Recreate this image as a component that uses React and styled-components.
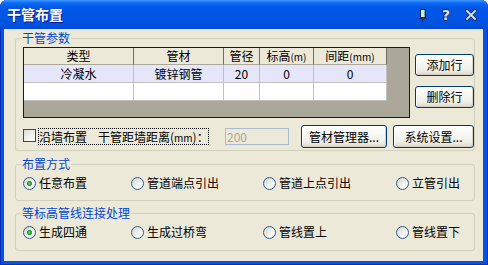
import React from 'react';
import styled, { createGlobalStyle } from 'styled-components';

const Global = createGlobalStyle`
  html, body { margin: 0; padding: 0; background: #ffffff; }
  body { font-family: "Noto Sans CJK SC", "Noto Sans", sans-serif; font-size: 12px; color: #000; }
  * { box-sizing: border-box; }
`;

const Window = styled.div`
  width: 488px;
  height: 265px;
  display: flex;
  flex-direction: column;
  background: #0553E3;
  border-radius: 7px 7px 0 0;
  overflow: hidden;
  box-shadow: inset 1px 0 #0831B8, inset -1px 0 #0831B8, inset 0 -1px #0831B8;
`;

const TitleBar = styled.div`
  height: 29px;
  flex: none;
  display: flex;
  align-items: center;
  padding: 0 11px 0 7px;
  background: linear-gradient(to bottom, #3F97FF 0%, #0F6BF5 10%, #0058E8 25%, #0055E5 60%, #0052E0 85%, #0049D3 100%);
`;

const Title = styled.div`
  color: #ffffff;
  font-weight: 700;
  font-size: 14px;
  line-height: 16px;
  text-shadow: 1px 1px #0A1A8A;
  margin-top: -1px;
`;

const Controls = styled.div`
  margin-left: auto;
  display: flex;
  align-items: center;
  height: 16px;
`;

const PinIcon = styled.svg`
  width: 8px;
  height: 13px;
  margin-right: 14px;
  margin-top: 1px;
`;

const HelpGlyph = styled.span`
  width: 10px;
  text-align: center;
  font-family: "DejaVu Sans", sans-serif;
  font-weight: 700;
  font-size: 14px;
  line-height: 14px;
  color: #CDEBFF;
  margin-right: 14px;
  text-shadow: 1px 0 #2B2266, -1px 0 #2B2266, 0 1px #2B2266, 0 -1px #2B2266;
`;

const CloseIcon = styled.svg`
  width: 12px;
  height: 12px;
`;

const Body = styled.div`
  flex: 1;
  margin: 0 5px 4px 4px;
  background: #ECE9D8;
  padding: 9px 8px 0 11px;
  display: flex;
  flex-direction: column;
`;

const Group = styled.div`
  position: relative;
  flex: none;
  border: 1px solid #D0D0BF;
  border-radius: 3px;
  margin-top: ${p => p.$mt || 0}px;
  height: ${p => p.$h}px;
  padding: ${p => p.$pad};
`;

const Legend = styled.span`
  position: absolute;
  top: -8px;
  left: 5px;
  padding: 0 1px;
  background: #ECE9D8;
  color: #0046D5;
  font-size: 12px;
  line-height: 14px;
`;

const TopRow = styled.div`
  display: flex;
  gap: 5px;
`;

const Table = styled.div`
  width: 387px;
  height: 71px;
  border: 1px solid #1A1A1A;
  background: #ABA899;
`;

const Grid = styled.div`
  display: grid;
  width: 363px;
  grid-template-columns: 110px 90px 36px 54px 73px;
  grid-template-rows: 17px 18px 18px;
`;

const HeadCell = styled.div`
  background: #ECE9D8;
  border-right: 1px solid #6F6E66;
  border-bottom: 1px solid #ACA899;
  text-align: center;
  line-height: 16px;
  white-space: nowrap;
`;

const Small = styled.span`
  font-size: 10px;
`;

const Cell = styled.div`
  background: ${p => (p.$sel ? '#E6E6FA' : '#ffffff')};
  border-right: 1px solid #C0C0C0;
  border-bottom: 1px solid #C0C0C0;
  text-align: center;
  line-height: 17px;
  white-space: nowrap;
`;

const SideButtons = styled.div`
  display: flex;
  flex-direction: column;
  gap: 10px;
  margin-top: 7px;
`;

const Button = styled.button`
  width: ${p => p.$w}px;
  height: ${p => p.$h || 23}px;
  margin-left: ${p => p.$ml || 0}px;
  padding: 0;
  border: 1px solid #003C74;
  border-radius: 3px;
  background: linear-gradient(to bottom, #FFFFFF 0%, #F7F7F3 40%, #EEEDE5 80%, #D8D3C6 100%);
  box-shadow: inset -1px -1px 0 #D6D0C2, inset 1px 1px 0 #FFFFFF;
  font-family: "Noto Sans CJK SC", sans-serif;
  font-size: 12px;
  line-height: 14px;
  color: #000;
  white-space: nowrap;
`;

const BottomRow = styled.div`
  display: flex;
  align-items: center;
  margin-top: 7px;
  height: 23px;
`;

const Checkbox = styled.span`
  width: 13px;
  height: 13px;
  flex: none;
  border: 1px solid #1C5180;
  background: linear-gradient(135deg, #DCDCD7 0%, #F4F4F0 60%, #FFFFFF 100%);
  margin-right: 2px;
  margin-top: -2px;
`;

const FocusLabel = styled.span`
  width: 171px;
  height: 17px;
  border: 1px dotted #000;
  line-height: 15px;
  white-space: nowrap;
  margin-right: 16px;
`;

const Gap = styled.span`
  margin-left: 11px;
`;

const TextInput = styled.input`
  width: 64px;
  height: 17px;
  border: 1px solid #A9BCD3;
  background: #ECE9D8;
  color: #ACA899;
  font-family: "Noto Sans CJK SC", sans-serif;
  font-size: 12px;
  padding: 0 0 0 1px;
  margin: 0 12px 0 0;
  line-height: 15px;
  outline: none;
`;

const RadioRow = styled.div`
  display: grid;
  grid-template-columns: 108px 132px 133px 1fr;
  align-items: center;
  height: 100%;
`;

const RadioItem = styled.div`
  display: flex;
  align-items: center;
  gap: 3px;
  white-space: nowrap;
  line-height: 14px;
`;

const RadioCircle = styled.span`
  width: 13px;
  height: 13px;
  flex: none;
  border-radius: 50%;
  border: 1px solid #2A5C8F;
  background: ${p =>
    p.$on
      ? 'radial-gradient(circle at 50% 50%, #5FD35F 0, #21A121 2.2px, transparent 2.8px), linear-gradient(135deg, #D2D2CC 0%, #F2F2EE 55%, #FFFFFF 100%)'
      : 'linear-gradient(135deg, #D2D2CC 0%, #F2F2EE 55%, #FFFFFF 100%)'};
`;

const headers = [
  ['类型'],
  ['管材'],
  ['管径'],
  ['标高', '(m)'],
  ['间距', '(mm)'],
];

const row1 = ['冷凝水', '镀锌钢管', '20', '0', '0'];

function Radio({ on, children }) {
  return (
    <RadioItem>
      <RadioCircle $on={on} />
      <span>{children}</span>
    </RadioItem>
  );
}

export default function App() {
  return (
    <>
      <Global />
      <Window>
        <TitleBar>
          <Title>干管布置</Title>
          <Controls>
            <PinIcon viewBox="0 0 8 13">
              <rect x="1.5" y="0.5" width="5" height="8" fill="#C4F2DC" stroke="#1E2A66" />
              <rect x="5" y="1" width="1" height="7" fill="#6FA7A0" />
              <line x1="0" y1="9.5" x2="8" y2="9.5" stroke="#1E2A66" />
              <line x1="3.5" y1="10" x2="3.5" y2="13" stroke="#1E2A66" />
            </PinIcon>
            <HelpGlyph>?</HelpGlyph>
            <CloseIcon viewBox="0 0 12 12">
              <path d="M2 2 L10 10 M10 2 L2 10" stroke="#2B2266" strokeWidth="3.6" strokeLinecap="square" />
              <path d="M2 2 L10 10 M10 2 L2 10" stroke="#CDEBFF" strokeWidth="1.8" strokeLinecap="square" />
            </CloseIcon>
          </Controls>
        </TitleBar>
        <Body>
          <Group $h={113} $pad="8px 0 0 7px">
            <Legend>干管参数</Legend>
            <TopRow>
              <Table>
                <Grid>
                  {headers.map((h, i) => (
                    <HeadCell key={'h' + i}>
                      {h[0]}
                      {h[1] && <Small>{h[1]}</Small>}
                    </HeadCell>
                  ))}
                  {row1.map((c, i) => (
                    <Cell key={'r1' + i} $sel>
                      {c}
                    </Cell>
                  ))}
                  {row1.map((c, i) => (
                    <Cell key={'r2' + i} />
                  ))}
                </Grid>
              </Table>
              <SideButtons>
                <Button $w={59} $h={22}>添加行</Button>
                <Button $w={59} $h={22}>删除行</Button>
              </SideButtons>
            </TopRow>
            <BottomRow>
              <Checkbox />
              <FocusLabel>
                沿墙布置<Gap>干管距墙距离(<Small>mm</Small>)：</Gap>
              </FocusLabel>
              <TextInput disabled readOnly value="200" />
              <Button $w={86}>管材管理器...</Button>
              <Button $w={81} $ml={6}>系统设置...</Button>
            </BottomRow>
          </Group>
          <Group $mt={13} $h={37} $pad="1px 0 0 7px">
            <Legend>布置方式</Legend>
            <RadioRow>
              <Radio on>任意布置</Radio>
              <Radio>管道端点引出</Radio>
              <Radio>管道上点引出</Radio>
              <Radio>立管引出</Radio>
            </RadioRow>
          </Group>
          <Group $mt={12} $h={38} $pad="0 0 0 7px">
            <Legend>等标高管线连接处理</Legend>
            <RadioRow>
              <Radio on>生成四通</Radio>
              <Radio>生成过桥弯</Radio>
              <Radio>管线置上</Radio>
              <Radio>管线置下</Radio>
            </RadioRow>
          </Group>
        </Body>
      </Window>
    </>
  );
}
